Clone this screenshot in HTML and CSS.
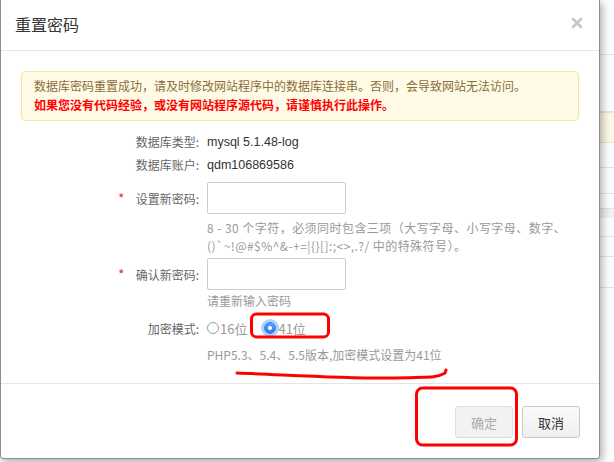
FILE: index.html
```html
<!DOCTYPE html>
<html lang="zh-CN">
<head>
    <meta charset="UTF-8">
    <title>重置密码</title>
    <link rel="stylesheet" href="styles.css">
</head>
<body>
    <!-- 背景页面（被弹窗遮挡） -->
    <div class="page">
        <div class="page-row" style="height: 55px"></div>
        <div class="page-row" style="height: 57px"></div>
        <div class="page-row warn" style="height: 31px"></div>
        <div class="page-row" style="height: 25px"></div>
        <div class="page-row" style="height: 26px"></div>
        <div class="page-row" style="height: 15px"></div>
        <div class="page-row gray" style="height: 9px"></div>
        <div class="page-row" style="height: 19px"></div>
        <div class="page-row" style="height: 20px"></div>
        <div class="page-row" style="height: 31px"></div>
    </div>

    <div class="modal">
        <div class="modal-header">
            <span class="modal-title">重置密码</span>
            <span class="close">
                <svg width="12" height="12" viewBox="0 0 12 12"><path d="M2 2 L10 10 M10 2 L2 10" stroke="#c6c6c6" stroke-width="2.6" stroke-linecap="round"/></svg>
            </span>
        </div>
        <div class="modal-body">
            <div class="alert">
                <p>数据库密码重置成功，请及时修改网站程序中的数据库连接串。否则，会导致网站无法访问。</p>
                <p class="alert-red">如果您没有代码经验，或没有网站程序源代码，请谨慎执行此操作。</p>
            </div>
            <div class="form">
                <div class="form-row info first">
                    <label>数据库类型:</label>
                    <span class="value">mysql 5.1.48-log</span>
                </div>
                <div class="form-row info">
                    <label>数据库账户:</label>
                    <span class="value">qdm106869586</span>
                </div>
                <div class="form-row field">
                    <label><i class="req">*</i>设置新密码:</label>
                    <input type="password" class="input">
                </div>
                <div class="help help-wide">8 - 30 个字符，必须同时包含三项（大写字母、小写字母、数字、<br>()`~!@#$%^&amp;-+=|{}[]:;&lt;&gt;,.?/ 中的特殊符号）。</div>
                <div class="form-row field second">
                    <label><i class="req">*</i>确认新密码:</label>
                    <input type="password" class="input">
                </div>
                <div class="help help-tight">请重新输入密码</div>
                <div class="form-row radios">
                    <label>加密模式:</label>
                    <div class="radio-group">
                        <span class="radio"><span class="dot"></span>16位</span>
                        <span class="radio checked"><span class="dot"></span>41位</span>
                    </div>
                </div>
                <div class="help help-last">PHP5.3、5.4、5.5版本,加密模式设置为41位</div>
            </div>
        </div>
        <div class="modal-footer">
            <button class="btn" disabled>确定</button>
            <button class="btn">取消</button>
        </div>
    </div>

    <!-- 截图上的红色手绘标注 -->
    <svg class="marks" width="614" height="462" viewBox="0 0 614 462">
        <rect x="251.5" y="314" width="77" height="23" rx="5" fill="none" stroke="#ff0000" stroke-width="3"/>
        <path d="M237 373 C 290 375, 350 379, 395 378 S 438 377, 445 373 L 446 370" fill="none" stroke="#ff0000" stroke-width="3" stroke-linecap="round"/>
        <rect x="416.5" y="388" width="100" height="57" rx="6" fill="none" stroke="#ff0000" stroke-width="3"/>
    </svg>
</body>
</html>
```

FILE: styles.css
```css
body {
    margin: 0;
    width: 614px;
    height: 462px;
    overflow: hidden;
    background-color: #fff;
    font-family: "Liberation Sans", "Noto Sans CJK SC", sans-serif;
    font-size: 12px;
    color: #333;
    position: relative;
}
.page-row {
    border-bottom: 1px solid #e3e3e3;
    box-sizing: border-box;
}
.page-row.warn {
    background-color: #fcfae9;
    border-top: 1px solid #f6e6b6;
    border-bottom-color: #f6e6b6;
}
.page-row.gray {
    background-color: #f2f2f2;
    border-bottom: none;
}
.modal {
    position: absolute;
    top: -1px;
    left: 0;
    width: 600px;
    height: 460px;
    box-sizing: border-box;
    background-color: #fff;
    border: 1px solid #8c8c8c;
    border-radius: 0 0 3px 3px;
    box-shadow: 2px 3px 10px rgba(0, 0, 0, 0.35);
}
.modal-header {
    height: 51px;
    box-sizing: border-box;
    border-bottom: 1px solid #e5e5e5;
    display: flex;
    justify-content: space-between;
    align-items: center;
    padding: 0 16px 2px 14px;
}
.modal-title {
    font-family: "Noto Sans CJK SC", sans-serif;
    font-size: 16px;
    color: #333;
}
.close {
    display: flex;
    margin-top: -2px;
}
.modal-body {
    padding: 20px 20px 19px 20px;
    border-bottom: 1px solid #e5e5e5;
}
.alert {
    height: 50px;
    box-sizing: border-box;
    background-color: #fffbe6;
    border: 1px solid #f8e3a4;
    border-radius: 4px;
    padding: 4px 12px 6px;
    font-family: "Noto Sans CJK SC", sans-serif;
}
.alert p {
    margin: 0;
    line-height: 19px;
    color: #8a6d3b;
}
.alert .alert-red {
    color: #ff0000;
    font-weight: bold;
}
.form-row {
    display: grid;
    grid-template-columns: 178px 1fr;
    column-gap: 8px;
    align-items: center;
}
.form-row label {
    display: flex;
    justify-content: flex-end;
    align-items: center;
    font-family: "Noto Sans CJK SC", sans-serif;
    color: #666;
}
.req {
    font-style: normal;
    color: #e4393c;
    font-size: 14px;
    margin-right: 11px;
}
.form-row.info {
    height: 23px;
}
.form-row.info.first {
    margin-top: 9px;
}
.value {
    color: #333;
    font-size: 12.5px;
}
.form-row.field {
    margin-top: 6px;
}
.form-row.field.second {
    margin-top: 3px;
}
.input {
    width: 139px;
    height: 32px;
    box-sizing: border-box;
    border: 1px solid #ccc;
    border-radius: 2px;
    margin: 0;
}
.help {
    margin-left: 186px;
    line-height: 18px;
    color: #999;
    font-family: "Noto Sans CJK SC", sans-serif;
    font-size: 12px;
}
.help-wide {
    margin-top: 5px;
    letter-spacing: 0.45px;
    white-space: nowrap;
}
.help-tight {
    margin-top: 2px;
}
.form-row.radios {
    height: 20px;
    margin-top: 8px;
}
.help-last {
    margin-top: 8px;
}
.radio-group {
    display: flex;
    align-items: center;
    gap: 17px;
    font-family: "Noto Sans CJK SC", sans-serif;
    color: #999;
    font-size: 13px;
}
.radio {
    display: flex;
    align-items: center;
    gap: 1px;
}
.dot {
    width: 12px;
    height: 12px;
    box-sizing: border-box;
    border: 1px solid #9a9a9a;
    border-radius: 50%;
    background-color: #fff;
    display: flex;
    justify-content: center;
    align-items: center;
}
.radio.checked .dot {
    border-color: #2f7de0;
    background: linear-gradient(#5aa5fb, #2a7ee8);
    box-shadow: 0 0 0 3px rgba(80, 150, 255, 0.45);
    margin-right: 1px;
}
.radio.checked .dot::after {
    content: "";
    width: 4px;
    height: 4px;
    border-radius: 50%;
    background-color: #fff;
}
.modal-footer {
    display: flex;
    justify-content: flex-end;
    gap: 9px;
    padding: 22px 19px 0;
}
.btn {
    width: 58px;
    height: 32px;
    border: 1px solid #c8c8c8;
    border-radius: 3px;
    background: linear-gradient(#fbfbfb, #efefef);
    font-family: "Noto Sans CJK SC", sans-serif;
    font-size: 13px;
    color: #333;
    padding: 0;
}
.btn:disabled {
    background: #f2f2f2;
    border-color: #dedede;
    color: #aaa;
}
.marks {
    position: absolute;
    top: 0;
    left: 0;
}
```
